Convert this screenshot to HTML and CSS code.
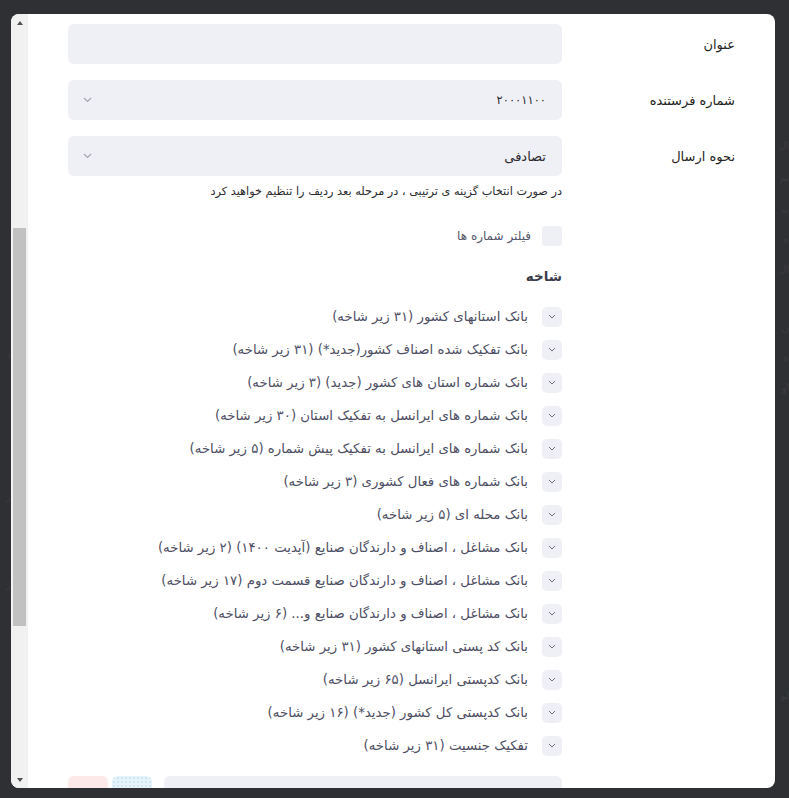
FILE: index.html
```html
<!DOCTYPE html>
<html lang="fa">
<head>
<meta charset="utf-8">
<title>ارسال پیامک</title>
<link rel="stylesheet" href="styles.css">
</head>
<body>
<div class="backdrop">
  <div class="bg-strip bg-left" dir="rtl">
    <span class="ghost g1">د</span>
    <span class="ghost g2">ر</span>
    <span class="ghost g3">ژ</span>
  </div>
  <div class="modal">
    <div class="scrollbar">
      <div class="sb-btn"><span class="tri-up"></span></div>
      <div class="sb-track"><div class="sb-thumb"></div></div>
      <div class="sb-btn"><span class="tri-down"></span></div>
    </div>
    <div class="content" dir="rtl">
      <div class="form-row">
        <label class="label">عنوان</label>
        <div class="field"></div>
      </div>
      <div class="form-row">
        <label class="label">شماره فرستنده</label>
        <div class="field select">
          <span class="value digits">۲۰۰۰۱۱۰۰</span>
          <svg class="chev" width="9" height="6" viewBox="0 0 9 6"><path d="M1 1l3.5 3.5L8 1" fill="none" stroke="#a3a4b3" stroke-width="1.1"/></svg>
        </div>
      </div>
      <div class="form-row last">
        <label class="label">نحوه ارسال</label>
        <div class="field select">
          <span class="value">تصادفی</span>
          <svg class="chev" width="9" height="6" viewBox="0 0 9 6"><path d="M1 1l3.5 3.5L8 1" fill="none" stroke="#a3a4b3" stroke-width="1.1"/></svg>
        </div>
      </div>
      <div class="main-col">
        <p class="hint">در صورت انتخاب گزینه ی ترتیبی ، در مرحله بعد ردیف را تنظیم خواهید کرد</p>
        <div class="check-row">
          <span class="checkbox"></span>
          <span class="check-label">فیلتر شماره ها</span>
        </div>
        <h3 class="section-title">شاخه</h3>
        <ul class="tree">
          <li class="tree-item"><span class="toggle"><svg width="8" height="5" viewBox="0 0 8 5"><path d="M1 1l3 3 3-3" fill="none" stroke="#6e6f82" stroke-width="1"/></svg></span><span class="tree-text">بانک استانهای کشور (۳۱ زیر شاخه)</span></li>
          <li class="tree-item"><span class="toggle"><svg width="8" height="5" viewBox="0 0 8 5"><path d="M1 1l3 3 3-3" fill="none" stroke="#6e6f82" stroke-width="1"/></svg></span><span class="tree-text">بانک تفکیک شده اصناف کشور(جدید*) (۳۱ زیر شاخه)</span></li>
          <li class="tree-item"><span class="toggle"><svg width="8" height="5" viewBox="0 0 8 5"><path d="M1 1l3 3 3-3" fill="none" stroke="#6e6f82" stroke-width="1"/></svg></span><span class="tree-text">بانک شماره استان های کشور (جدید) (۳ زیر شاخه)</span></li>
          <li class="tree-item"><span class="toggle"><svg width="8" height="5" viewBox="0 0 8 5"><path d="M1 1l3 3 3-3" fill="none" stroke="#6e6f82" stroke-width="1"/></svg></span><span class="tree-text">بانک شماره های ایرانسل به تفکیک استان (۳۰ زیر شاخه)</span></li>
          <li class="tree-item"><span class="toggle"><svg width="8" height="5" viewBox="0 0 8 5"><path d="M1 1l3 3 3-3" fill="none" stroke="#6e6f82" stroke-width="1"/></svg></span><span class="tree-text">بانک شماره های ایرانسل به تفکیک پیش شماره (۵ زیر شاخه)</span></li>
          <li class="tree-item"><span class="toggle"><svg width="8" height="5" viewBox="0 0 8 5"><path d="M1 1l3 3 3-3" fill="none" stroke="#6e6f82" stroke-width="1"/></svg></span><span class="tree-text">بانک شماره های فعال کشوری (۳ زیر شاخه)</span></li>
          <li class="tree-item"><span class="toggle"><svg width="8" height="5" viewBox="0 0 8 5"><path d="M1 1l3 3 3-3" fill="none" stroke="#6e6f82" stroke-width="1"/></svg></span><span class="tree-text">بانک محله ای (۵ زیر شاخه)</span></li>
          <li class="tree-item"><span class="toggle"><svg width="8" height="5" viewBox="0 0 8 5"><path d="M1 1l3 3 3-3" fill="none" stroke="#6e6f82" stroke-width="1"/></svg></span><span class="tree-text">بانک مشاغل ، اصناف و دارندگان صنایع (آپدیت ۱۴۰۰) (۲ زیر شاخه)</span></li>
          <li class="tree-item"><span class="toggle"><svg width="8" height="5" viewBox="0 0 8 5"><path d="M1 1l3 3 3-3" fill="none" stroke="#6e6f82" stroke-width="1"/></svg></span><span class="tree-text">بانک مشاغل ، اصناف و دارندگان صنایع قسمت دوم (۱۷ زیر شاخه)</span></li>
          <li class="tree-item"><span class="toggle"><svg width="8" height="5" viewBox="0 0 8 5"><path d="M1 1l3 3 3-3" fill="none" stroke="#6e6f82" stroke-width="1"/></svg></span><span class="tree-text">بانک مشاغل ، اصناف و دارندگان صنایع و... (۶ زیر شاخه)</span></li>
          <li class="tree-item"><span class="toggle"><svg width="8" height="5" viewBox="0 0 8 5"><path d="M1 1l3 3 3-3" fill="none" stroke="#6e6f82" stroke-width="1"/></svg></span><span class="tree-text">بانک کد پستی استانهای کشور (۳۱ زیر شاخه)</span></li>
          <li class="tree-item"><span class="toggle"><svg width="8" height="5" viewBox="0 0 8 5"><path d="M1 1l3 3 3-3" fill="none" stroke="#6e6f82" stroke-width="1"/></svg></span><span class="tree-text">بانک کدپستی ایرانسل (۶۵ زیر شاخه)</span></li>
          <li class="tree-item"><span class="toggle"><svg width="8" height="5" viewBox="0 0 8 5"><path d="M1 1l3 3 3-3" fill="none" stroke="#6e6f82" stroke-width="1"/></svg></span><span class="tree-text">بانک کدپستی کل کشور (جدید*) (۱۶ زیر شاخه)</span></li>
          <li class="tree-item"><span class="toggle"><svg width="8" height="5" viewBox="0 0 8 5"><path d="M1 1l3 3 3-3" fill="none" stroke="#6e6f82" stroke-width="1"/></svg></span><span class="tree-text">تفکیک جنسیت (۳۱ زیر شاخه)</span></li>
        </ul>
        <div class="bottom-row">
          <div class="field bottom-field"></div>
          <span class="swatch swatch-blue"></span>
          <span class="swatch swatch-red"></span>
        </div>
      </div>
    </div>
  </div>
  <div class="bg-strip bg-right" dir="rtl">
    <span class="ghost r1">ال</span>
    <span class="ghost r2">تم</span>
    <span class="ghost r3">یه</span>
    <span class="ghost r4">ه</span>
    <span class="ghost r5">ال</span>
    <span class="ghost r6">ن</span>
    <span class="ghost r7">ه</span>
    <span class="ghost r8">او</span>
    <span class="ghost r9">لو</span>
  </div>
</div>
</body>
</html>
```

FILE: styles.css
```css
* { box-sizing: border-box; }

html, body {
  margin: 0;
  height: 798px;
  overflow: hidden;
}

body {
  background: #2f3034;
  font-family: "DejaVu Sans", "Noto Sans", sans-serif;
}

.backdrop {
  display: flex;
  padding-top: 14px;
  height: 798px;
}

.bg-strip {
  display: flex;
  flex-direction: column;
  color: #3c3d42;
  font-size: 10px;
  white-space: nowrap;
}

.bg-left { width: 11px; align-items: flex-start; }
.bg-right { width: 14px; align-items: flex-start; }

.ghost { display: block; line-height: 18px; }
.g1 { margin-top: 332px; }
.g2 { margin-top: 124px; }
.g3 { margin-top: 70px; }

.r1 { margin-top: 123px; }
.r2 { margin-top: 14px; }
.r3 { margin-top: 14px; }
.r4 { margin-top: 12px; }
.r5 { margin-top: 12px; }
.r6 { margin-top: 40px; }
.r7 { margin-top: 12px; }
.r8 { margin-top: 12px; }
.r9 { margin-top: 290px; }

.modal {
  width: 764px;
  height: 774px;
  background: #fff;
  border-radius: 8px;
  display: flex;
  overflow: hidden;
  flex-shrink: 0;
}

/* scrollbar */
.scrollbar {
  width: 17px;
  flex-shrink: 0;
  background: #f1f1f1;
  display: flex;
  flex-direction: column;
}

.sb-btn {
  height: 17px;
  display: flex;
  align-items: center;
  justify-content: center;
}

.tri-up {
  width: 0; height: 0;
  border-left: 3.5px solid transparent;
  border-right: 3.5px solid transparent;
  border-bottom: 4px solid #505050;
}

.tri-down {
  width: 0; height: 0;
  border-left: 3.5px solid transparent;
  border-right: 3.5px solid transparent;
  border-top: 4px solid #505050;
}

.sb-track {
  flex: 1;
  padding: 0 2px;
}

.sb-thumb {
  margin-top: 197px;
  height: 398px;
  background: #c1c1c1;
}

/* content */
.content {
  flex: 1;
  padding: 10px 40px 0 40px;
  display: flex;
  flex-direction: column;
  color: #222;
}

.form-row {
  display: grid;
  grid-template-columns: 173px 1fr;
  align-items: center;
  margin-bottom: 16px;
}

.form-row.last { margin-bottom: 0; }

.label {
  font-size: 13px;
  color: #1f1f24;
}

.field {
  height: 40px;
  background: #eff0f5;
  border-radius: 6px;
}

.select {
  display: flex;
  align-items: center;
  justify-content: space-between;
  padding: 0 16px 0 15px;
}

.value {
  font-size: 13px;
  color: #2a2a30;
}

.digits {
  font-size: 11.5px;
  letter-spacing: -1.2px;
}

.chev { display: block; }

.main-col {
  margin-right: 173px;
  display: flex;
  flex-direction: column;
}

.hint {
  margin: 6px 0 0;
  font-size: 11.3px;
  line-height: 20px;
  color: #2b2b30;
}

.check-row {
  display: flex;
  align-items: center;
  gap: 11px;
  margin-top: 24px;
}

.checkbox {
  width: 20px;
  height: 20px;
  border-radius: 4px;
  background: #eff0f5;
  flex-shrink: 0;
}

.check-label {
  font-size: 12px;
  color: #55566a;
}

.section-title {
  margin: 18px 0 0;
  font-size: 13.5px;
  line-height: 24px;
  font-weight: bold;
  color: #3b3c4c;
}

.tree {
  list-style: none;
  margin: 12px 0 0;
  padding: 0;
}

.tree-item {
  height: 33px;
  display: flex;
  align-items: center;
  gap: 14px;
}

.toggle {
  width: 20px;
  height: 20px;
  border-radius: 5px;
  background: #eff0f5;
  display: flex;
  align-items: center;
  justify-content: center;
  flex-shrink: 0;
}

.toggle svg { display: block; }

.tree-text {
  font-size: 13.3px;
  color: #4d4e63;
  white-space: nowrap;
}

.bottom-row {
  display: flex;
  margin-top: 14px;
  height: 40px;
}

.bottom-field {
  width: 398px;
  flex-shrink: 0;
}

.swatch {
  width: 40px;
  height: 40px;
  border-radius: 6px;
  flex-shrink: 0;
}

.swatch-blue {
  margin-right: 12px;
  background-color: #e6f3fb;
  background-image: radial-gradient(circle, #cfe6f5 0.8px, transparent 1px);
  background-size: 4px 4px;
}

.swatch-red {
  margin-right: 4px;
  background: #fdeae8;
}
```
